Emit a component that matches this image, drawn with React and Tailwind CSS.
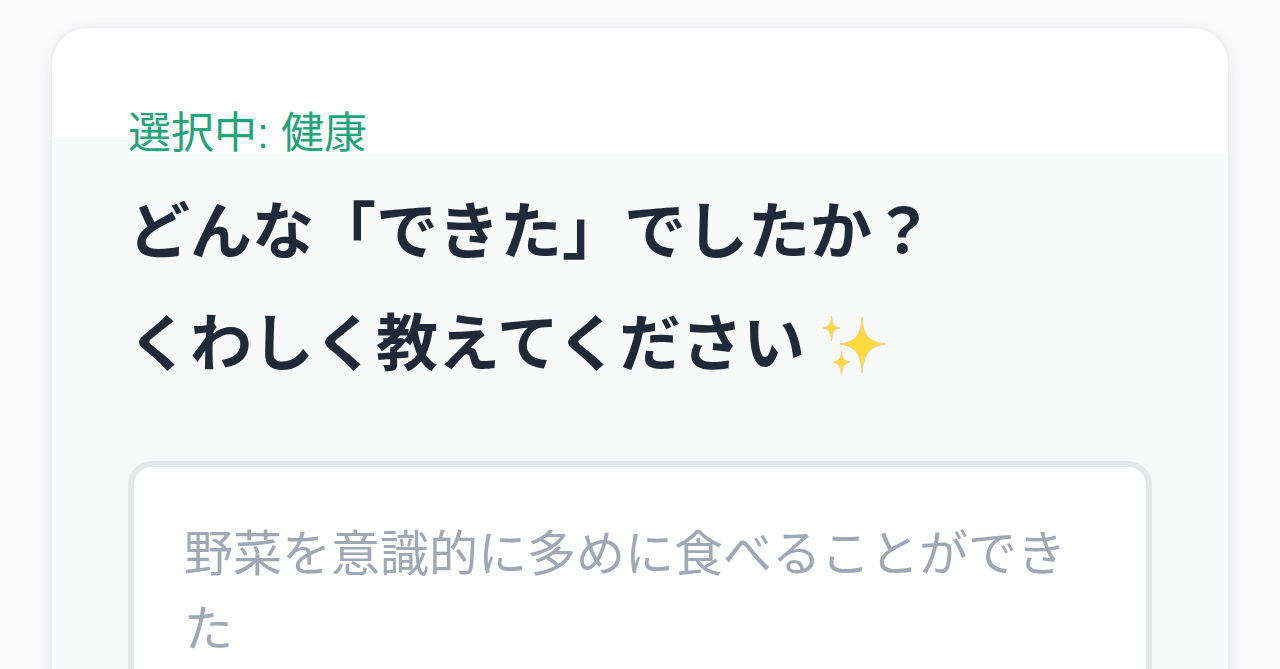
import React, { useState } from 'react';

const SparklesIcon = () => (
  <svg
    className="ml-4 h-16 w-16 shrink-0"
    viewBox="0 0 64 64"
    fill="#fdda3e"
    stroke="#f6cf8c"
    strokeWidth="1"
    strokeLinejoin="round"
    role="img"
    aria-label="✨"
  >
    <path d="M41 4 C42.5 22 46 28 64 31 C48 34 43 40 41 60 C39.500 40 35 34 19 31 C36 28 39.500 22 41 4Z" />
    <path d="M10.500 3 C11 11 13 14 19 15 C13 16.500 11.500 18 10.500 28 C9.500 18 8 16.500 2 15 C8 14 10 11 10.500 3Z" />
    <path d="M20.500 38 C21 45 23 48 29 49 C23 50.500 21.500 53 20.500 62 C19.500 53 18 50.500 12 49 C18 48 20 45 20.500 38Z" />
  </svg>
);

const App = () => {
  const [text, setText] = useState('');

  return (
    <div className="h-screen overflow-hidden bg-[#fafafb] px-[52px] pt-7 font-['Liberation_Sans','Noto_Sans_CJK_JP',sans-serif]">
      <main className="flex min-h-screen flex-col rounded-t-[36px] bg-[linear-gradient(#fff_109px,#f7faf9_109px),linear-gradient(#fff_126px,#f7faf9_126px)] bg-[size:76px_100%,100%_100%] bg-no-repeat px-[76px] pt-[73px] shadow-[0_8px_24px_rgba(30,41,100,0.06),0_0_6px_rgba(30,41,80,0.07)]">
        <p className="text-[43px] leading-[64px] text-[#1fa577]">選択中: 健康</p>

        <h1 className="mt-3 text-[62px] font-bold leading-[112px] text-[#1f2937]">
          <label htmlFor="detail">
            <span className="block">どんな「できた」でしたか？</span>
            <span className="flex items-center">
              くわしく教えてください
              <SparklesIcon />
            </span>
          </label>
        </h1>

        <textarea
          id="detail"
          value={text}
          onChange={(e) => setText(e.target.value)}
          placeholder="野菜を意識的に多めに食べることができた"
          className="mt-[60px] min-h-[320px] w-full flex-1 resize-none rounded-3xl border-[6px] border-[#e5e7eb] bg-white px-[50px] py-[50px] text-[49px] leading-[75px] text-[#1f2937] outline-none placeholder:text-[#9fa8b4]"
        />
      </main>
    </div>
  );
};

export default App;
